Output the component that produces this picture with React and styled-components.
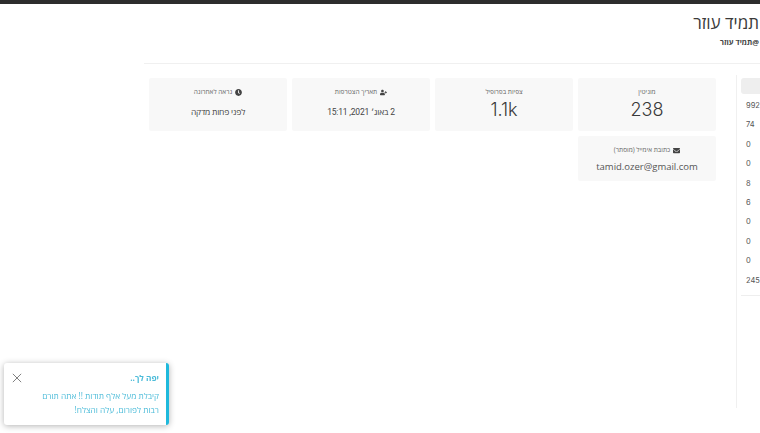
import styled, { createGlobalStyle } from "styled-components";
import { FaEnvelope, FaUserPlus, FaClock } from "react-icons/fa";

const GlobalStyle = createGlobalStyle`
  html, body {
    margin: 0;
    height: 100%;
    overflow: hidden;
    background: #fff;
    font-family: "Open Sans", "Liberation Sans", sans-serif;
  }
`;

const stats = [
  { label: "מוניטין", value: "238", big: true },
  { label: "צפיות בפרופיל", value: "1.1k", big: true },
  { label: "תאריך הצטרפות", value: "2 באוג׳ 2021, 15:11", icon: <FaUserPlus /> },
  { label: "נראה לאחרונה", value: "לפני פחות מדקה", icon: <FaClock /> },
];

const sideNumbers = [992, 74, 0, 0, 8, 6, 0, 0, 0, 245];

const App = () => {
  return (
    <>
      <GlobalStyle />
      <TopBar />
      <Main>
        <Header>
          <Title>תמיד עוזר</Title>
          <Handle>@תמיד עוזר</Handle>
        </Header>
        <Content>
          <Sidebar>
            <SideHead />
            <SideList>
              {sideNumbers.map((num, index) => (
                <SideItem key={index}>{num}</SideItem>
              ))}
            </SideList>
          </Sidebar>
          <Cards>
            {stats.map((item) => (
              <Card key={item.label}>
                <CardLabel>
                  {item.icon}
                  {item.label}
                </CardLabel>
                <CardValue $big={item.big}>{item.value}</CardValue>
              </Card>
            ))}
            <EmailCard>
              <CardLabel>
                <FaEnvelope />
                כתובת אימייל (מוסתר)
              </CardLabel>
              <EmailValue>tamid.ozer@gmail.com</EmailValue>
            </EmailCard>
          </Cards>
        </Content>
      </Main>
      <Toast>
        <ToastText>
          <ToastTitle>יפה לך..</ToastTitle>
          <ToastBody>
            קיבלת מעל אלף תודות !! אתה תורם
            <br />
            רבות לפורום, עלה והצלח!
          </ToastBody>
        </ToastText>
        <CloseIcon viewBox="0 0 12 12">
          <path d="M1 1l10 10M11 1L1 11" />
        </CloseIcon>
      </Toast>
    </>
  );
};

// page
const TopBar = styled.div`
  height: 4px;
  background: #2d2d2d;
`;

const Main = styled.div`
  direction: rtl;
  margin-left: 144px;
  height: 429px;
  overflow: hidden;
`;

// header
const Header = styled.div`
  height: 59px;
  padding-right: 1px;
  border-bottom: 1px solid #f0f0f0;
`;

const Title = styled.div`
  padding-top: 7px;
  font-size: 17px;
  line-height: 24px;
  color: #3a3a3a;
`;

const Handle = styled.div`
  margin-top: 1px;
  font-size: 7.5px;
  line-height: 12px;
  font-weight: 700;
  color: #444;
`;

// content
const Content = styled.div`
  display: flex;
  align-items: flex-start;
  padding-top: 11px;
`;

const Sidebar = styled.div`
  flex: 0 0 19px;
  height: 330px;
  padding: 3px 0 0 4px;
  border-left: 1px solid #f0f0f0;
`;

const SideHead = styled.div`
  height: 16px;
  background: #eee;
  border-radius: 3px 0 0 3px;
`;

const SideList = styled.div`
  direction: ltr;
  padding: 2px 0 5px 5px;
  border-bottom: 1px solid #eee;
`;

const SideItem = styled.div`
  height: 19.4px;
  font-size: 7.5px;
  line-height: 19.4px;
  font-family: "Inter", sans-serif;
  color: #555;
`;

const Cards = styled.div`
  display: grid;
  grid-template-columns: repeat(4, 138px);
  grid-auto-rows: min-content;
  gap: 5px;
  margin-top: 3px;
  margin-right: 20px;
`;

const Card = styled.div`
  height: 53px;
  box-sizing: border-box;
  padding-top: 9px;
  background: #f8f8f8;
  border-radius: 2px;
  text-align: center;
`;

const EmailCard = styled(Card)`
  height: 45px;
  padding-top: 9px;
`;

const CardLabel = styled.div`
  display: flex;
  align-items: center;
  justify-content: center;
  gap: 3px;
  font-size: 6.5px;
  line-height: 10px;
  color: #666;

  svg {
    font-size: 7px;
    color: #444;
  }
`;

const CardValue = styled.div`
  margin-top: ${(props) => (props.$big ? "1px" : "8px")};
  font-family: ${(props) => (props.$big ? '"Inter", sans-serif' : '"Roboto", "Open Sans", sans-serif')};
  font-weight: ${(props) => (props.$big ? 300 : 400)};
  font-size: ${(props) => (props.$big ? "18px" : "8.5px")};
  line-height: ${(props) => (props.$big ? "24px" : "14px")};
  letter-spacing: ${(props) => (props.$big ? "0" : "-0.2px")};
  color: ${(props) => (props.$big ? "#3a3a3a" : "#444")};
`;

const EmailValue = styled.div`
  margin-top: 5px;
  font-family: "Open Sans", sans-serif;
  font-size: 9.5px;
  line-height: 14px;
  color: #555;
`;

// toast
const Toast = styled.div`
  position: fixed;
  left: 4px;
  top: 363px;
  width: 165px;
  height: 62px;
  box-sizing: border-box;
  display: flex;
  direction: rtl;
  justify-content: space-between;
  padding: 9px 7px 0 8px;
  background: #fff;
  border-right: 3px solid #1fb9dc;
  border-radius: 3px;
  box-shadow: 0 1px 6px rgba(0, 0, 0, 0.3);
`;

const ToastText = styled.div`
  color: #4dbcd9;
`;

const ToastTitle = styled.div`
  font-size: 8.3px;
  line-height: 12px;
  font-weight: 700;
`;

const ToastBody = styled.div`
  margin-top: 5px;
  font-size: 8.3px;
  line-height: 14px;
`;

const CloseIcon = styled.svg`
  width: 10px;
  height: 10px;
  margin-top: 1px;
  fill: none;
  stroke: #666;
  stroke-width: 1;
`;

export default App;
